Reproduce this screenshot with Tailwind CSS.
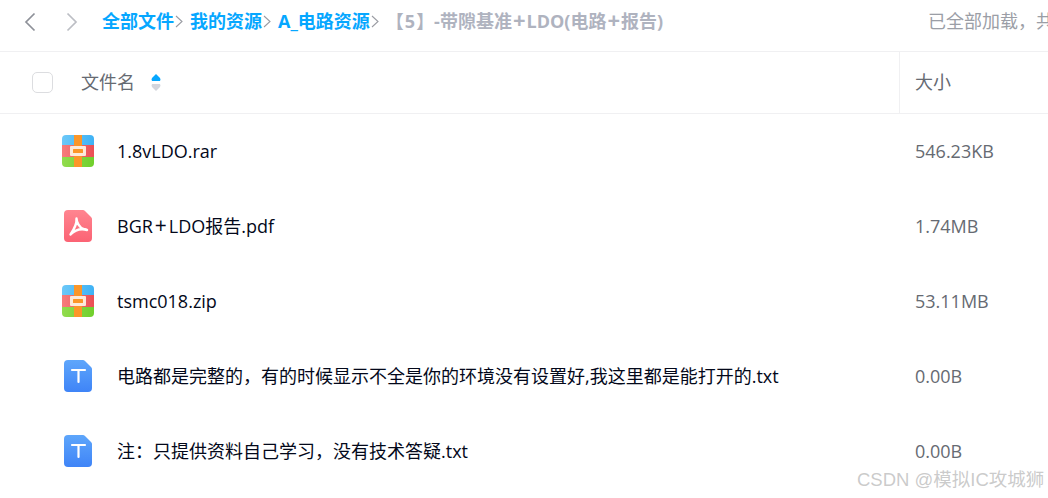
<!DOCTYPE html>
<html lang="zh-CN">
<head>
    <meta charset="UTF-8">
    <title>文件列表</title>
    <script src="https://cdn.jsdelivr.net/npm/@tailwindcss/browser@4"></script>
</head>
<body class="relative w-[1048px] h-[498px] overflow-hidden bg-white font-['Open_Sans','Noto_Sans_CJK_SC',sans-serif]">
    <!-- top bar -->
    <div class="flex items-center h-[52px] pb-[8px] border-b border-[#f0f0f2] whitespace-nowrap">
        <svg class="ml-[23px] w-[13px] h-[20px]" viewBox="0 0 13 20" fill="none" stroke="#8e9199" stroke-width="1.7"><path d="M11.500 1.500 3 10l8.500 8.500"/></svg>
        <svg class="ml-[30px] w-[13px] h-[20px]" viewBox="0 0 13 20" fill="none" stroke="#bcbec4" stroke-width="1.700"><path d="M1.500 1.500 10 10l-8.500 8.500"/></svg>
        <div class="ml-[23px] flex items-center text-[18px] font-bold text-[#06a7ff]">
            <span>全部文件</span>
            <svg class="ml-[1px] w-[8px] h-[13px]" viewBox="0 0 8 13" fill="none" stroke="#9a9ca3" stroke-width="1.1"><path d="M1 1l6 5.500-6 5.500"/></svg>
            <span class="ml-[7px]">我的资源</span>
            <svg class="ml-[1px] w-[8px] h-[13px]" viewBox="0 0 8 13" fill="none" stroke="#9a9ca3" stroke-width="1.1"><path d="M1 1l6 5.500-6 5.500"/></svg>
            <span class="ml-[7px]">A_电路资源</span>
            <svg class="ml-[1px] w-[8px] h-[13px]" viewBox="0 0 8 13" fill="none" stroke="#9a9ca3" stroke-width="1.1"><path d="M1 1l6 5.500-6 5.500"/></svg>
            <span class="ml-[7px] text-[#afb3bf]">【<span class="mx-[1px]">5</span>】-带隙基准<span class="mx-[1px] text-[22px] leading-none">+</span>LDO(电路<span class="mx-[1px] text-[22px] leading-none">+</span>报告)</span>
        </div>
        <span class="ml-auto w-[120px] shrink-0 overflow-hidden text-[18px] text-[#9b9ea6]">已全部加载，共</span>
    </div>

    <!-- table head -->
    <div class="flex items-stretch h-[62px] border-b border-[#f0f0f2] text-[18px] text-[#666a72]">
        <div class="flex items-center w-[900px] border-r border-[#f0f0f2]">
            <span class="ml-[32px] w-[21px] h-[21px] rounded-[5px] border border-[#dcdde0]"></span>
            <span class="ml-[28px]">文件名</span>
            <svg class="ml-[16px] w-[10px] h-[17px]" viewBox="0 0 10 17"><path d="M5 0 9 4q1 1.500 0 3H1Q0 5.500 1 4z" fill="#06a7ff"/><path d="M1 10h8q1 1.500 0 3l-4 4-4-4q-1-1.500 0-3z" fill="#d4d5dc"/></svg>
        </div>
        <div class="flex items-center pl-[15px]">大小</div>
    </div>

    <!-- rows -->
    <div class="text-[18px] text-[#03081a]">
        <div class="flex items-center h-[75px]">
            <svg class="ml-[62px] mb-[1px] w-[32px] h-[32px]" viewBox="0 0 32 32"><defs><linearGradient id="a" x1="0" x2="1" y1="0" y2="0"><stop offset="0" stop-color="#6cc8f8"/><stop offset="1" stop-color="#3fb2f5"/></linearGradient><linearGradient id="b" x1="0" x2="1" y1="0" y2="0"><stop offset="0" stop-color="#f77c7c"/><stop offset="1" stop-color="#ea4f55"/></linearGradient><linearGradient id="c" x1="0" x2="1" y1="0" y2="0"><stop offset="0" stop-color="#92dc4e"/><stop offset="1" stop-color="#70cf2c"/></linearGradient></defs><path d="M4 0h24a4 4 0 0 1 4 4v6H0V4a4 4 0 0 1 4-4z" fill="url(#a)"/><path d="M0 10h32v12H0z" fill="url(#b)"/><path d="M0 22h32v6a4 4 0 0 1-4 4H4a4 4 0 0 1-4-4z" fill="url(#c)"/><path d="M12 0h8v32h-8z" fill="#fb9629"/><rect x="8" y="11" width="16" height="10" rx="1" fill="#fdeadb"/><rect x="11" y="14" width="10" height="4" rx=".5" fill="#fb9629"/></svg>
            <span class="ml-[23px]">1.8vLDO.rar</span>
            <span class="absolute left-[915px] text-[#666a72]">546.23KB</span>
        </div>
        <div class="flex items-center h-[75px]">
            <svg class="ml-[64px] mb-[1px] w-[28px] h-[32px]" viewBox="0 0 28 32"><defs><linearGradient id="d" x1="0" x2="0" y1="0" y2="1"><stop offset="0" stop-color="#ff8590"/><stop offset="1" stop-color="#fb6374"/></linearGradient></defs><path d="M4 0h15q1 0 2 1l6 6q1 1 1 2v19a4 4 0 0 1-4 4H4a4 4 0 0 1-4-4V4a4 4 0 0 1 4-4z" fill="url(#d)"/><path d="M12.500 8.500c0 3.500 3 9.500 7 10.500 1.500.4 3 .3 3.500 1M12.500 8.500c.5 5-2.500 11-6 16M6.500 24.500c4-4 9.500-6.500 16.500-4.500" fill="none" stroke="#fff" stroke-width="2.400" stroke-linecap="round"/></svg>
            <span class="ml-[25px]">BGR<span class="mx-[2px] text-[21px] leading-none">+</span>LDO报告.pdf</span>
            <span class="absolute left-[915px] text-[#666a72]">1.74MB</span>
        </div>
        <div class="flex items-center h-[75px]">
            <svg class="ml-[62px] mb-[1px] w-[32px] h-[32px]" viewBox="0 0 32 32"><path d="M4 0h24a4 4 0 0 1 4 4v6H0V4a4 4 0 0 1 4-4z" fill="url(#a)"/><path d="M0 10h32v12H0z" fill="url(#b)"/><path d="M0 22h32v6a4 4 0 0 1-4 4H4a4 4 0 0 1-4-4z" fill="url(#c)"/><path d="M12 0h8v32h-8z" fill="#fb9629"/><rect x="8" y="11" width="16" height="10" rx="1" fill="#fdeadb"/><rect x="11" y="14" width="10" height="4" rx=".5" fill="#fb9629"/></svg>
            <span class="ml-[23px]">tsmc018.zip</span>
            <span class="absolute left-[915px] text-[#666a72]">53.11MB</span>
        </div>
        <div class="flex items-center h-[75px]">
            <svg class="ml-[64px] mb-[1px] w-[28px] h-[32px]" viewBox="0 0 28 32"><defs><linearGradient id="e" x1="0" x2="0" y1="0" y2="1"><stop offset="0" stop-color="#5ea6fb"/><stop offset="1" stop-color="#3f84f7"/></linearGradient></defs><path d="M4 0h15q1 0 2 1l6 6q1 1 1 2v19a4 4 0 0 1-4 4H4a4 4 0 0 1-4-4V4a4 4 0 0 1 4-4z" fill="url(#e)"/><path d="M8 10h13M14.500 10v12" fill="none" stroke="#fff" stroke-width="2.200" stroke-linecap="round"/></svg>
            <span class="ml-[25px]">电路都是完整的，有的时候显示不全是你的环境没有设置好,我这里都是能打开的.txt</span>
            <span class="absolute left-[915px] text-[#666a72]">0.00B</span>
        </div>
        <div class="flex items-center h-[75px]">
            <svg class="ml-[64px] mb-[1px] w-[28px] h-[32px]" viewBox="0 0 28 32"><path d="M4 0h15q1 0 2 1l6 6q1 1 1 2v19a4 4 0 0 1-4 4H4a4 4 0 0 1-4-4V4a4 4 0 0 1 4-4z" fill="url(#e)"/><path d="M8 10h13M14.500 10v12" fill="none" stroke="#fff" stroke-width="2.200" stroke-linecap="round"/></svg>
            <span class="ml-[25px]">注：只提供资料自己学习，没有技术答疑.txt</span>
            <span class="absolute left-[915px] text-[#666a72]">0.00B</span>
        </div>
    </div>

    <!-- watermark -->
    <span class="absolute left-[857px] top-[468px] font-['Liberation_Sans','Noto_Sans_CJK_SC',sans-serif] text-[18.500px] leading-[24px] text-[#b4b4b4]/70 whitespace-nowrap">CSDN @模拟IC攻城狮</span>
</body>
</html>
